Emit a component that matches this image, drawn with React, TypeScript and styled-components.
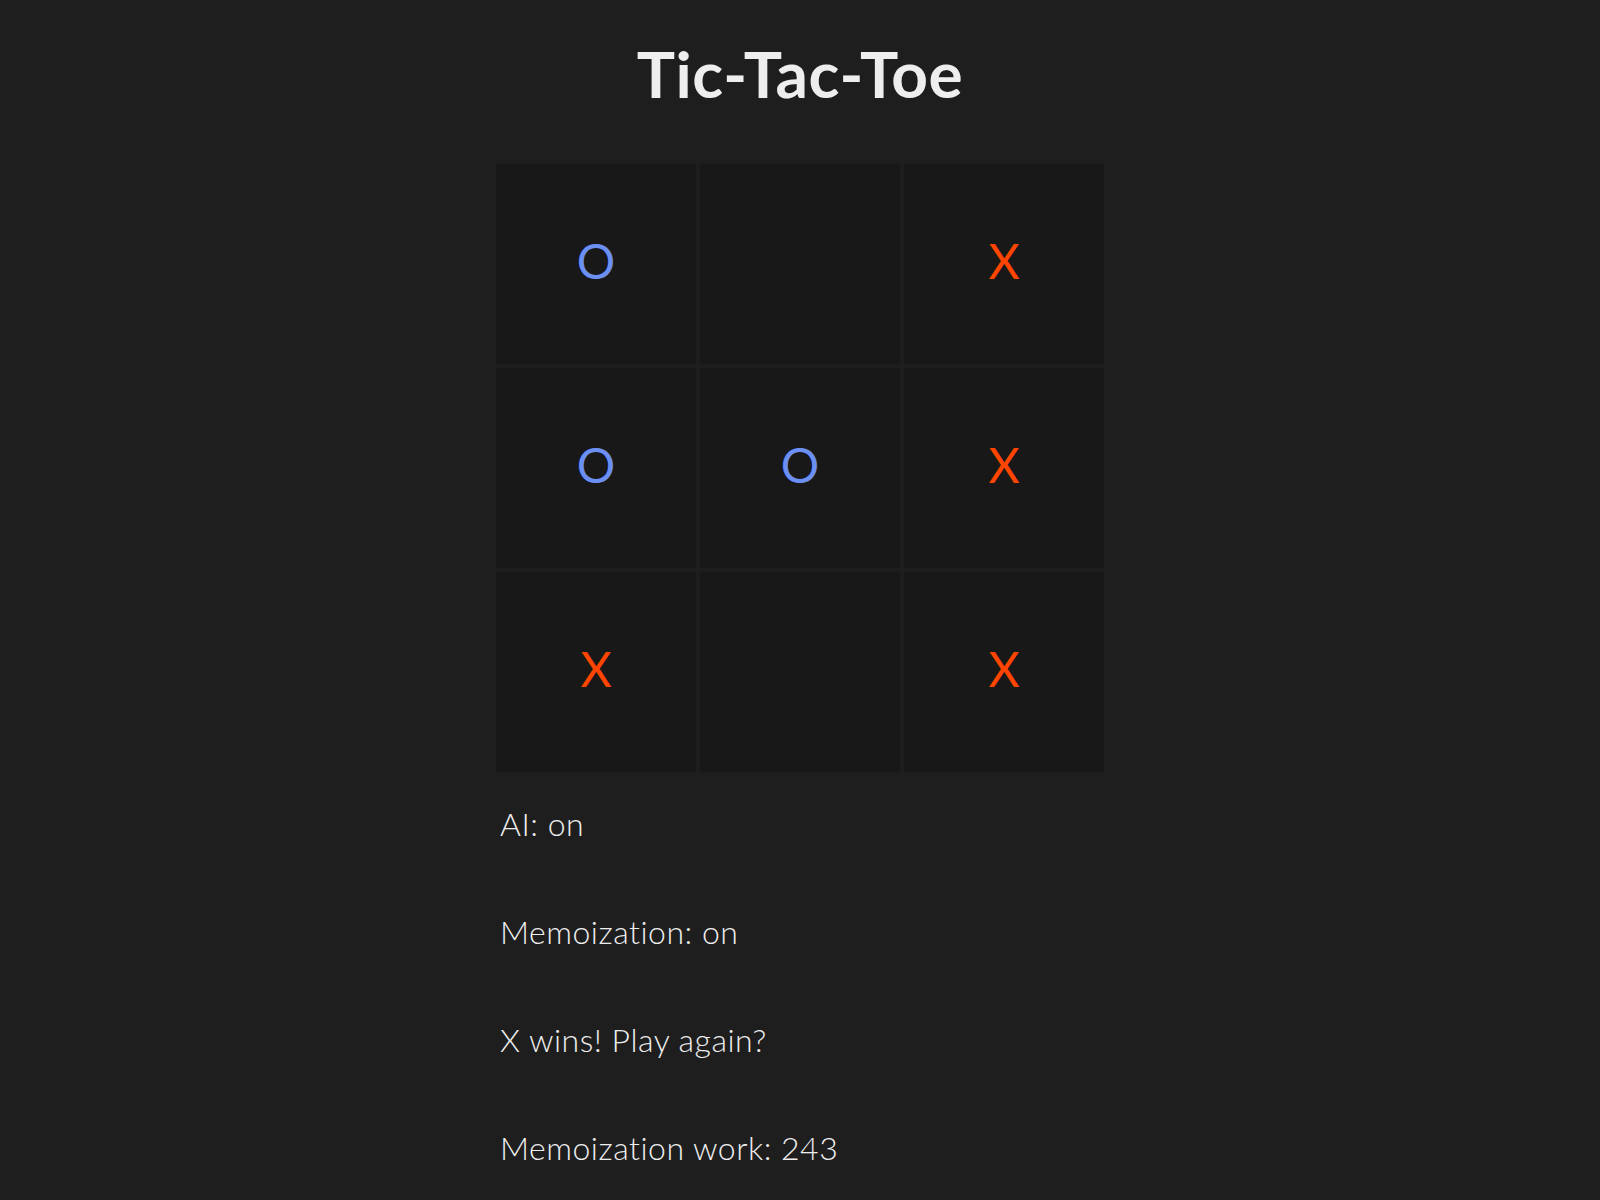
import styled, { createGlobalStyle } from "styled-components";

const GlobalStyle = createGlobalStyle`
	html, body {
		margin: 0;
		padding: 0;
		background-color: #1e1e1e;
	}

	body {
		color: #eeeeee;
		font-family: Lato, "Open Sans", sans-serif;
	}
`;

const Page = styled.div`
	align-items: center;
	display: flex;
	flex-direction: column;
	min-height: 1200px;
	padding-top: 36px;
	box-sizing: border-box;
`;

const Title = styled.h1`
	font-size: 64px;
	font-weight: 700;
	letter-spacing: 0.5px;
	line-height: 1.2;
	margin: 0 0 51px;
`;

const Board = styled.div`
	display: grid;
	gap: 4px;
	grid-template-columns: repeat(3, 200px);
	grid-template-rows: repeat(3, 200px);
`;

const Cell = styled.div<{ $mark: Mark }>`
	align-items: center;
	background-color: #181818;
	color: ${({ $mark }) => ($mark === "X" ? "#ff4500" : "#6b8ff2")};
	display: flex;
	font-size: 48px;
	font-weight: 400;
	justify-content: center;
	line-height: 1;
	padding-bottom: 6px;
	box-sizing: border-box;
`;

const Status = styled.div`
	display: flex;
	flex-direction: column;
	gap: 60px;
	margin-top: 28px;
	width: 608px;
`;

const StatusLine = styled.p`
	font-size: 32px;
	font-weight: 300;
	letter-spacing: 0.5px;
	line-height: 48px;
	margin: 0;
	padding-left: 4px;
`;

type Mark = "X" | "O" | null;

const board: Mark[] = ["O", null, "X", "O", "O", "X", "X", null, "X"];

const lines = [
	"AI: on",
	"Memoization: on",
	"X wins! Play again?",
	"Memoization work: 243",
];

export default function App() {
	return (
		<>
			<GlobalStyle />
			<Page>
				<Title>Tic-Tac-Toe</Title>
				<Board>
					{board.map((mark, i) => (
						<Cell key={i} $mark={mark}>
							{mark}
						</Cell>
					))}
				</Board>
				<Status>
					{lines.map((line) => (
						<StatusLine key={line}>{line}</StatusLine>
					))}
				</Status>
			</Page>
		</>
	);
}
